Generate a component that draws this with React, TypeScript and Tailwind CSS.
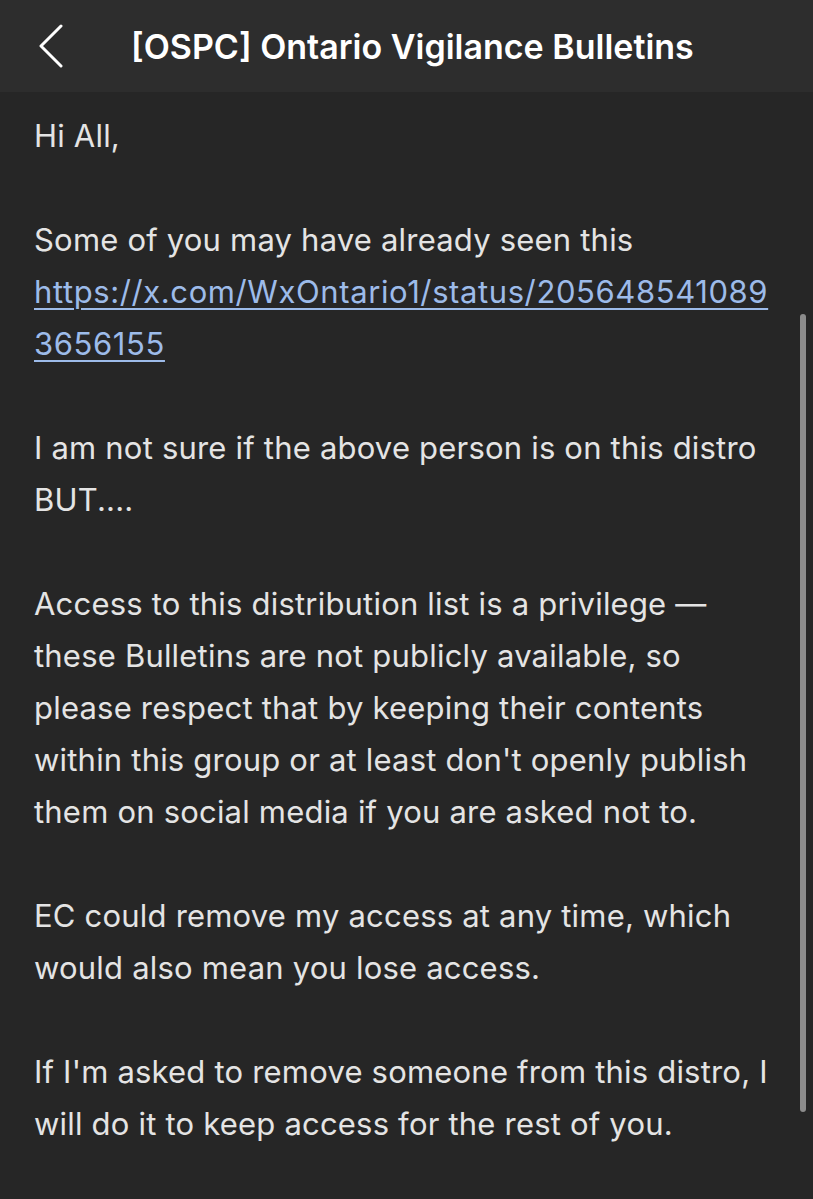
import { ReactNode } from "react";

const Para = ({ children }: { children: ReactNode }) => (
  <p className="mb-[52px] last:mb-0">{children}</p>
);

const App = () => {
  return (
    <div className="relative min-h-[1199px] w-[813px] overflow-hidden bg-[#262626] font-['Inter','Liberation_Sans',sans-serif] text-[#e4e4e4]">
      <header className="flex h-[92px] items-center bg-[#2d2d2d]">
        <button className="ml-[36px] flex h-[48px] w-[30px] items-center justify-center">
          <svg width="26" height="44" viewBox="0 0 26 44" fill="none">
            <path
              d="M23 2 L3 22 L23 42"
              stroke="#ffffff"
              strokeWidth="3"
              strokeLinecap="round"
              strokeLinejoin="round"
            />
          </svg>
        </button>
        <h1 className="ml-[65px] whitespace-nowrap text-[34px] font-semibold text-white">
          [OSPC] Ontario Vigilance Bulletins
        </h1>
      </header>

      <main className="px-[34px] pt-[18px] text-[31px] leading-[52px] tracking-[0.2px] whitespace-nowrap">
        <Para>Hi All,</Para>
        <Para>
          Some of you may have already seen this
          <br />
          <a className="tracking-[0.6px] text-[#9dbbe9] underline decoration-[2px] underline-offset-[5px]">
            https://x.com/WxOntario1/status/205648541089
            <br />
            3656155
          </a>
        </Para>
        <Para>
          I am not sure if the above person is on this distro
          <br />
          BUT....
        </Para>
        <Para>
          Access to this distribution list is a privilege —
          <br />
          these Bulletins are not publicly available, so
          <br />
          please respect that by keeping their contents
          <br />
          within this group or at least don't openly publish
          <br />
          them on social media if you are asked not to.
        </Para>
        <Para>
          EC could remove my access at any time, which
          <br />
          would also mean you lose access.
        </Para>
        <Para>
          If I'm asked to remove someone from this distro, I
          <br />
          will do it to keep access for the rest of you.
        </Para>
      </main>

      <div className="absolute left-[800px] top-[314px] h-[798px] w-[6px] rounded-full bg-[#8c8c8c]" />
    </div>
  );
};

export default App;
